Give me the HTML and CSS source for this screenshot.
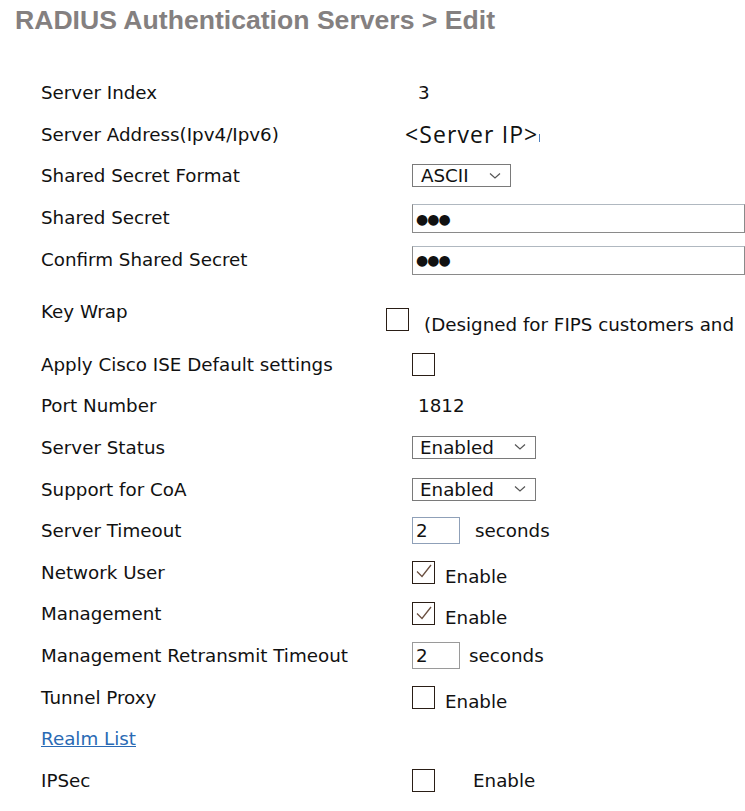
FILE: index.html
```html
<!DOCTYPE html>
<html>
<head>
<meta charset="utf-8">
<link rel="stylesheet" href="styles.css">
</head>
<body>
<h1 class="title">RADIUS Authentication Servers &gt; Edit</h1>
<div class="form">
  <div class="row"><div class="label">Server Index</div><div class="value"><span class="plain idx">3</span></div></div>
  <div class="row"><div class="label">Server Address(Ipv4/Ipv6)</div><div class="value"><span class="ip">&lt;Server IP&gt;</span><span class="caret"></span></div></div>
  <div class="row"><div class="label">Shared Secret Format</div><div class="value"><div class="select sel-ascii"><span>ASCII</span><svg class="chev" width="12" height="8" viewBox="0 0 12 8"><path d="M1 1.5 L6 6 L11 1.5" fill="none" stroke="#555" stroke-width="1.2"/></svg></div></div></div>
  <div class="row"><div class="label">Shared Secret</div><div class="value"><div class="pwd">&#9679;&#9679;&#9679;</div></div></div>
  <div class="row"><div class="label">Confirm Shared Secret</div><div class="value"><div class="pwd">&#9679;&#9679;&#9679;</div></div></div>
  <div class="row row-tall"><div class="label">Key Wrap</div><div class="value value-keywrap"><span class="cb"></span><span class="note">(Designed for FIPS customers and</span></div></div>
  <div class="row"><div class="label">Apply Cisco ISE Default settings</div><div class="value"><span class="cb"></span></div></div>
  <div class="row"><div class="label">Port Number</div><div class="value"><span class="plain port">1812</span></div></div>
  <div class="row"><div class="label">Server Status</div><div class="value"><div class="select sel-en"><span>Enabled</span><svg class="chev" width="12" height="8" viewBox="0 0 12 8"><path d="M1 1.5 L6 6 L11 1.5" fill="none" stroke="#555" stroke-width="1.2"/></svg></div></div></div>
  <div class="row"><div class="label">Support for CoA</div><div class="value"><div class="select sel-en"><span>Enabled</span><svg class="chev" width="12" height="8" viewBox="0 0 12 8"><path d="M1 1.5 L6 6 L11 1.5" fill="none" stroke="#555" stroke-width="1.2"/></svg></div></div></div>
  <div class="row"><div class="label">Server Timeout</div><div class="value"><div class="num num-blue">2</div><span class="unit">seconds</span></div></div>
  <div class="row"><div class="label">Network User</div><div class="value"><span class="cb"><svg width="22" height="22" viewBox="0 0 22 22"><path d="M4 10.5 L9 15.5 L18 4" fill="none" stroke="#6b5040" stroke-width="1.3"/></svg></span><span class="en">Enable</span></div></div>
  <div class="row"><div class="label">Management</div><div class="value"><span class="cb"><svg width="22" height="22" viewBox="0 0 22 22"><path d="M4 10.5 L9 15.5 L18 4" fill="none" stroke="#6b5040" stroke-width="1.3"/></svg></span><span class="en">Enable</span></div></div>
  <div class="row"><div class="label">Management Retransmit Timeout</div><div class="value"><div class="num">2</div><span class="unit unit2">seconds</span></div></div>
  <div class="row"><div class="label">Tunnel Proxy</div><div class="value"><span class="cb"></span><span class="en">Enable</span></div></div>
  <div class="row"><div class="label"><a class="link" href="#">Realm List</a></div><div class="value"></div></div>
  <div class="row"><div class="label">IPSec</div><div class="value"><span class="cb"></span><span class="en en-wide">Enable</span></div></div>
</div>
</body>
</html>
```
FILE: styles.css
```css
html, body {
  margin: 0;
  padding: 0;
  background: #ffffff;
  overflow: hidden;
}
body {
  width: 745px;
  height: 811px;
  font-family: "DejaVu Sans", Verdana, sans-serif;
  font-size: 18.3px;
  color: #111;
}
.title {
  margin: 0;
  padding: 5px 0 0 15px;
  height: 66px;
  box-sizing: border-box;
  font-family: "Liberation Sans", Arial, sans-serif;
  font-weight: bold;
  font-size: 26.6px;
  color: #848080;
  white-space: nowrap;
}
.form {
  display: flex;
  flex-direction: column;
  padding-left: 41px;
  padding-top: 6px;
}
.row {
  display: flex;
  align-items: center;
  height: 41.6px;
}
.row-tall {
  height: 63.5px;
}
.label {
  width: 371px;
  flex: none;
  white-space: nowrap;
}
.value {
  display: flex;
  align-items: center;
  flex: 1;
  white-space: nowrap;
  min-width: 0;
}
.plain.idx { padding-left: 6px; }
.plain.port { padding-left: 6px; }
.ip {
  font-family: "Open Sans", "Noto Sans", sans-serif;
  font-size: 23px;
  letter-spacing: 1.1px;
  margin-left: -7px;
}
.caret {
  display: inline-block;
  width: 1px;
  height: 8px;
  background: #4a7fc0;
  margin-left: 1px;
  margin-top: 7px;
}
.select {
  display: flex;
  align-items: center;
  justify-content: space-between;
  height: 23px;
  box-sizing: border-box;
  border: 1px solid #7a7a7a;
  padding: 0 9px 0 8px;
  background: #fff;
}
.sel-ascii { width: 99px; }
.sel-en { width: 124px; padding-left: 7px; }
.chev { display: block; }
.pwd {
  height: 29px;
  width: 400px;
  box-sizing: border-box;
  border: 1px solid #8a8a8a;
  border-top-color: #b0b8c0;
  padding: 0 0 0 3px;
  display: flex;
  align-items: center;
  font-size: 14px;
  letter-spacing: -1px;
  margin-top: 2px;
}
.value-keywrap {
  align-items: center;
  margin-left: -26px;
  padding-top: 16px;
}
.cb {
  display: inline-block;
  width: 23px;
  height: 23px;
  box-sizing: border-box;
  border: 1.5px solid #2a1e16;
  background: #fff;
  flex: none;
  position: relative;
}
.cb svg { display: block; margin: -0.5px; }
.note {
  margin-left: 15px;
  margin-top: 10px;
}
.en {
  margin-left: 10px;
  margin-top: 8px;
}
.en-wide { margin-left: 38px; margin-top: 0; }
.num {
  width: 48px;
  height: 27px;
  box-sizing: border-box;
  border: 1px solid #9a9a9a;
  padding-left: 3px;
  display: flex;
  align-items: center;
}
.num-blue { border-color: #8fa0b8; }
.unit { margin-left: 15px; }
.unit2 { margin-left: 9px; }
.link {
  color: #2a6ab4;
  text-decoration: underline;
}
```
